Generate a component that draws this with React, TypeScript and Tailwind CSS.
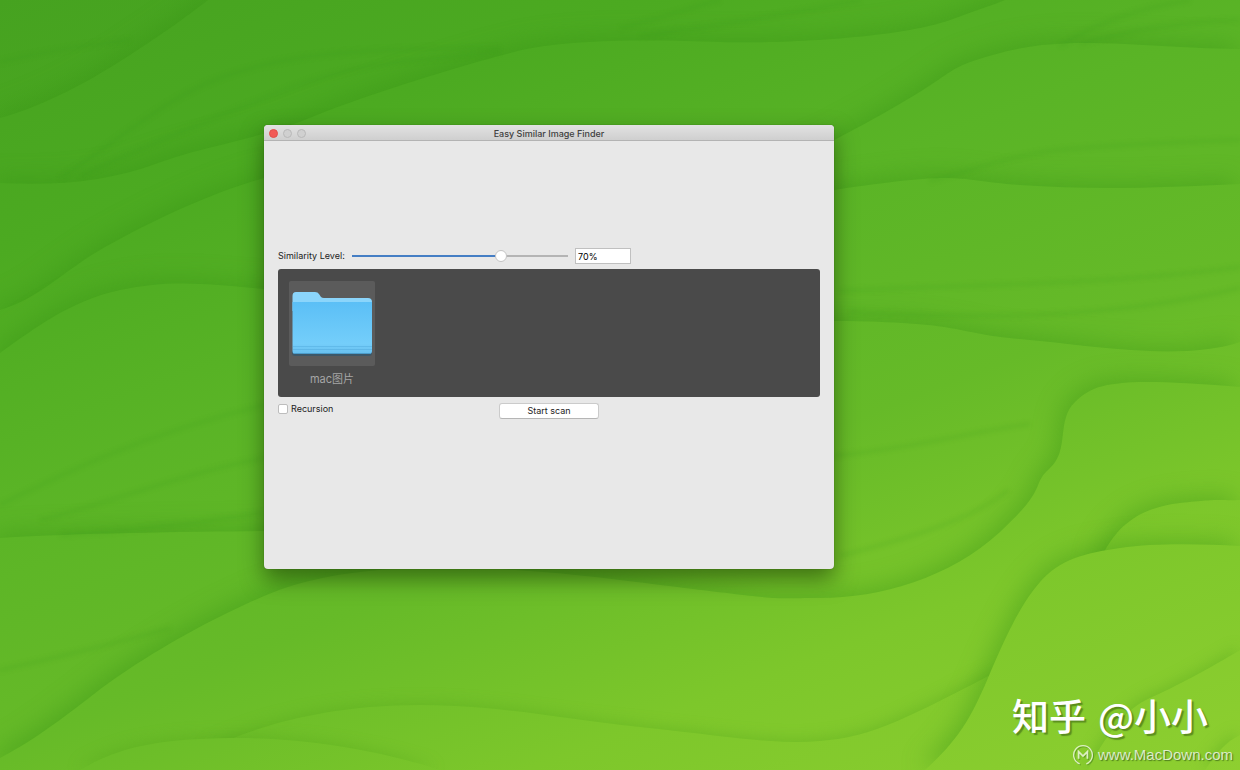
import { useState } from 'react';

const farRidges = [
  { id: 'a', d: 'M0 118 C45 106 95 78 130 55 S185 18 208 0 H1240 V770 H0 Z' },
  { id: 'b', d: 'M0 183 C60 186 110 181 158 163 S250 142 312 117 S460 66 514 52 S660 40 720 42 S900 38 950 20 S990 6 1005 0 H1240 V770 H0 Z' },
  { id: 'c', d: 'M0 310 C40 298 65 270 100 250 S200 196 264 178 S700 210 838 138 S930 72 1000 53 S1140 48 1240 49 V770 H0 Z' },
  { id: 'd', d: 'M0 353 C35 328 70 301 120 290 S210 284 264 289 S700 210 834 190 S950 180 1020 185 S1160 188 1240 184 V770 H0 Z' },
  { id: 'e', d: 'M0 538 C80 533 180 532 264 531 S700 320 834 321 S950 333 1020 339 S1180 362 1240 342 V770 H0 Z' },
  { id: 'f', d: 'M0 758 C50 732 90 695 120 675 S195 626 264 596 S440 558 620 580 S760 598 820 598 S950 578 1000 532 S1030 486 1050 468 S1056 420 1075 402 S1110 376 1240 387 V770 H0 Z' },
];

const softRidges = [
  { id: 'i', d: 'M210 748 C270 720 340 705 420 705 S560 719 640 727 S770 745 820 741 S900 722 1000 670 V770 H210 Z' },
  { id: 'j', d: 'M80 770 C120 746 160 739 230 738 S380 750 440 770 Z' },
];

const nearRidges = [
  { id: 'g', d: 'M1102 556 C1115 530 1135 508 1180 503 S1220 501 1240 500 V770 H1090 Z' },
  { id: 'h', d: 'M925 770 C958 740 970 720 988 678 S1020 605 1040 582 S1085 553 1120 548 S1200 544 1240 546 V770 Z' },
];

const cornerRidges = [
  { id: 'k', d: 'M1088 770 C1105 736 1125 709 1150 698 S1210 668 1240 650 V770 Z' },
  { id: 'l', d: 'M1205 770 C1215 755 1225 742 1240 735 V770 Z' },
];

const creases = [
  'M0 62 C50 50 90 45 130 40',
  'M60 178 C120 140 165 98 220 78 S330 48 500 48',
  'M80 176 C160 140 220 115 290 88 S420 60 500 52',
  'M620 28 C660 18 690 8 720 0',
  'M640 36 C720 25 800 12 860 0',
  'M1060 46 C1095 24 1130 10 1190 0',
  'M1080 44 C1130 30 1180 22 1240 20',
  'M930 181 C980 168 1010 155 1060 150 S1180 142 1240 140',
  'M840 291 C940 285 1100 286 1240 267',
  'M850 312 C950 316 1090 324 1240 288',
  'M0 505 C60 475 140 435 264 405',
  'M40 520 C110 503 180 474 264 458',
  'M60 535 C140 530 210 522 264 512',
  'M0 670 C60 657 120 642 170 628',
  'M834 456 C920 447 970 432 1030 424',
  'M840 556 C900 540 970 522 1008 490',
];

function Wallpaper() {
  return (
    <svg
      className="absolute inset-0 h-full w-full"
      viewBox="0 0 1240 770"
      preserveAspectRatio="xMidYMid slice"
      aria-hidden="true"
    >
      <defs>
        <linearGradient id="grass" gradientUnits="userSpaceOnUse" x1="0" y1="0" x2="418" y2="1086">
          <stop offset="0" stopColor="#46a220" />
          <stop offset="0.2" stopColor="#4caa21" />
          <stop offset="0.4" stopColor="#5ab426" />
          <stop offset="0.6" stopColor="#66ba28" />
          <stop offset="0.78" stopColor="#7dc72b" />
          <stop offset="1" stopColor="#8ecf30" />
        </linearGradient>
        <filter id="ridge" filterUnits="userSpaceOnUse" x="-60" y="-60" width="1360" height="890" colorInterpolationFilters="sRGB">
          <feDropShadow dx="-5" dy="-4" stdDeviation="12" floodColor="#349214" floodOpacity="0.42" />
        </filter>
        <filter id="soft" filterUnits="userSpaceOnUse" x="-60" y="-60" width="1360" height="890" colorInterpolationFilters="sRGB">
          <feDropShadow dx="-3" dy="-3" stdDeviation="7" floodColor="#4fa41a" floodOpacity="0.35" />
        </filter>
        <filter id="haze" filterUnits="userSpaceOnUse" x="-60" y="-60" width="1360" height="890" colorInterpolationFilters="sRGB">
          <feGaussianBlur stdDeviation="2" />
        </filter>
      </defs>
      <rect width="1240" height="770" fill="url(#grass)" />
      {farRidges.map((ridge) => (
        <path key={ridge.id} d={ridge.d} fill="url(#grass)" filter="url(#ridge)" />
      ))}
      {softRidges.map((ridge) => (
        <path key={ridge.id} d={ridge.d} fill="url(#grass)" filter="url(#soft)" />
      ))}
      {nearRidges.map((ridge) => (
        <path key={ridge.id} d={ridge.d} fill="url(#grass)" filter="url(#ridge)" />
      ))}
      {cornerRidges.map((ridge) => (
        <path key={ridge.id} d={ridge.d} fill="url(#grass)" filter="url(#soft)" />
      ))}
      <g fill="none" stroke="#349214" strokeWidth="4" strokeOpacity="0.14" filter="url(#haze)">
        {creases.map((d) => (
          <path key={d} d={d} />
        ))}
      </g>
    </svg>
  );
}

function FolderIcon() {
  return (
    <svg className="h-[66px] w-[82px]" viewBox="0 0 82 66" aria-hidden="true">
      <defs>
        <linearGradient id="folder" x1="0" y1="0" x2="0" y2="1">
          <stop offset="0" stopColor="#5bbff6" />
          <stop offset="0.8" stopColor="#74cefa" />
          <stop offset="1" stopColor="#68bfee" />
        </linearGradient>
      </defs>
      <path d="M1 60 H81 V62 Q81 65 78 65 H4 Q1 65 1 62 Z" fill="#30566c" opacity="0.7" />
      <path d="M1.5 5 Q1.5 1 5 1 H24 Q27 1 28 3 L30 6 Q31 7 33 7 H77 Q81 7 81 11 V20 H1.5 Z" fill="#8bd5fb" />
      <path d="M1.5 11 H81 V60 Q81 63 78 63 H4 Q1.5 63 1.5 60 Z" fill="url(#folder)" />
      <path d="M2 55.5 H81 M2 58.5 H81" stroke="#4fa9dc" strokeWidth="1" opacity="0.45" />
      <path d="M3 62.5 H80" stroke="#4b9cca" strokeWidth="1" />
    </svg>
  );
}

function TitleBar() {
  return (
    <header className="grid h-4 grid-cols-[1fr_auto_1fr] items-center rounded-t border-b border-[#b3b3b3] bg-linear-to-b from-[#e2e2e2] to-[#cfcfcf] px-[5px] pt-0.5">
      <div className="flex gap-[5px]">
        <button aria-label="Close" className="size-[9px] rounded-full border border-[#e2504b] bg-[#f25a56]" />
        <button aria-label="Minimize" className="size-[9px] rounded-full border border-[#b9b9b9] bg-[#d0d0d0]" />
        <button aria-label="Zoom" className="size-[9px] rounded-full border border-[#b9b9b9] bg-[#d0d0d0]" />
      </div>
      <h1 className="text-[9px] leading-3 font-medium text-[#404040]">Easy Similar Image Finder</h1>
    </header>
  );
}

function FinderWindow() {
  const [level, setLevel] = useState(70);
  const [recursion, setRecursion] = useState(false);

  return (
    <main className="absolute top-[125px] left-[264px] w-[570px] rounded bg-[#e8e8e8] font-[Inter,'Noto_Sans_CJK_SC',sans-serif] text-[9px] leading-3 text-[#1c1c1c] shadow-[0_10px_22px_rgba(20,50,0,0.55),0_0_1px_rgba(0,0,0,0.5)]">
      <TitleBar />
      <div className="flex flex-col px-3.5 pt-[107px] pb-[150px]">
        <div className="flex h-4 items-center">
          <label htmlFor="level" className="w-[74px]">Similarity Level:</label>
          <input
            id="level"
            type="range"
            value={level}
            onChange={(e) => setLevel(Number(e.target.value))}
            className="h-3 w-[216px] appearance-none bg-[length:100%_2px] bg-center bg-no-repeat [&::-webkit-slider-thumb]:size-3 [&::-webkit-slider-thumb]:appearance-none [&::-webkit-slider-thumb]:rounded-full [&::-webkit-slider-thumb]:border [&::-webkit-slider-thumb]:border-[#c4c4c4] [&::-webkit-slider-thumb]:bg-white"
            style={{ backgroundImage: `linear-gradient(to right, #457ec4 ${level}%, #b4b4b4 ${level}%)` }}
          />
          <input
            type="text"
            aria-label="Similarity percentage"
            value={`${level}%`}
            onChange={(e) => setLevel(Math.min(100, parseInt(e.target.value, 10) || 0))}
            className="ml-[7px] h-4 w-14 border border-[#c0c0c0] bg-white px-0.5 text-black"
          />
        </div>

        <section className="mt-[5px] flex h-32 rounded-[3px] bg-[#4a4a4a] px-[11px] pt-3">
          <figure className="flex w-[86px] flex-col items-center">
            <div className="flex h-[85px] w-full items-center justify-center rounded-xs bg-[#5b5b5b]">
              <FolderIcon />
            </div>
            <figcaption className="mt-[5px] text-[11px] leading-4 text-[#a6a6a6]">mac图片</figcaption>
          </figure>
        </section>

        <div className="mt-[6px] grid grid-cols-[1fr_auto_1fr] items-start">
          <label className="flex items-center gap-[3px]">
            <input
              type="checkbox"
              checked={recursion}
              onChange={(e) => setRecursion(e.target.checked)}
              className="size-2.5 appearance-none rounded-xs border border-[#bdbdbd] bg-white checked:bg-[#457ec4]"
            />
            Recursion
          </label>
          <button className="h-4 w-[100px] rounded-[3px] border border-[#cbcbcb] border-b-[#b5b5b5] bg-white">
            Start scan
          </button>
        </div>
      </div>
    </main>
  );
}

function Watermark() {
  return (
    <footer className="absolute right-[7px] bottom-1 flex flex-col items-end gap-1 text-white">
      <p className="mr-[25px] flex gap-3 font-['Noto_Sans_CJK_SC',sans-serif] text-[37px] leading-[50px] font-medium [text-shadow:2px_2px_1px_rgba(60,100,20,0.6)]">
        <span>知乎</span>
        <span>@小小</span>
      </p>
      <p className="flex items-center gap-1 font-['Liberation_Sans',Arial,sans-serif] text-[15px] leading-5 text-white/75 [text-shadow:1px_1px_1px_rgba(50,90,20,0.7)]">
        <svg className="size-[22px]" viewBox="0 0 20 20" fill="none" aria-hidden="true">
          <g stroke="#4f8420" strokeOpacity="0.6" transform="translate(1 1)">
            <path d="M7 18 A8.5 8.5 0 1 1 13 18" />
            <path d="M6 13.5 V7 L10 11 L14 7 V13.5" />
          </g>
          <g stroke="#dcefc2" strokeWidth="1.2">
            <path d="M7 18 A8.5 8.5 0 1 1 13 18" />
            <path d="M6 13.5 V7 L10 11 L14 7 V13.5" strokeWidth="1.6" />
          </g>
        </svg>
        www.MacDown.com
      </p>
    </footer>
  );
}

function App() {
  return (
    <div className="relative min-h-screen overflow-hidden bg-[#5ab426]">
      <Wallpaper />
      <FinderWindow />
      <Watermark />
    </div>
  );
}

export default App;
